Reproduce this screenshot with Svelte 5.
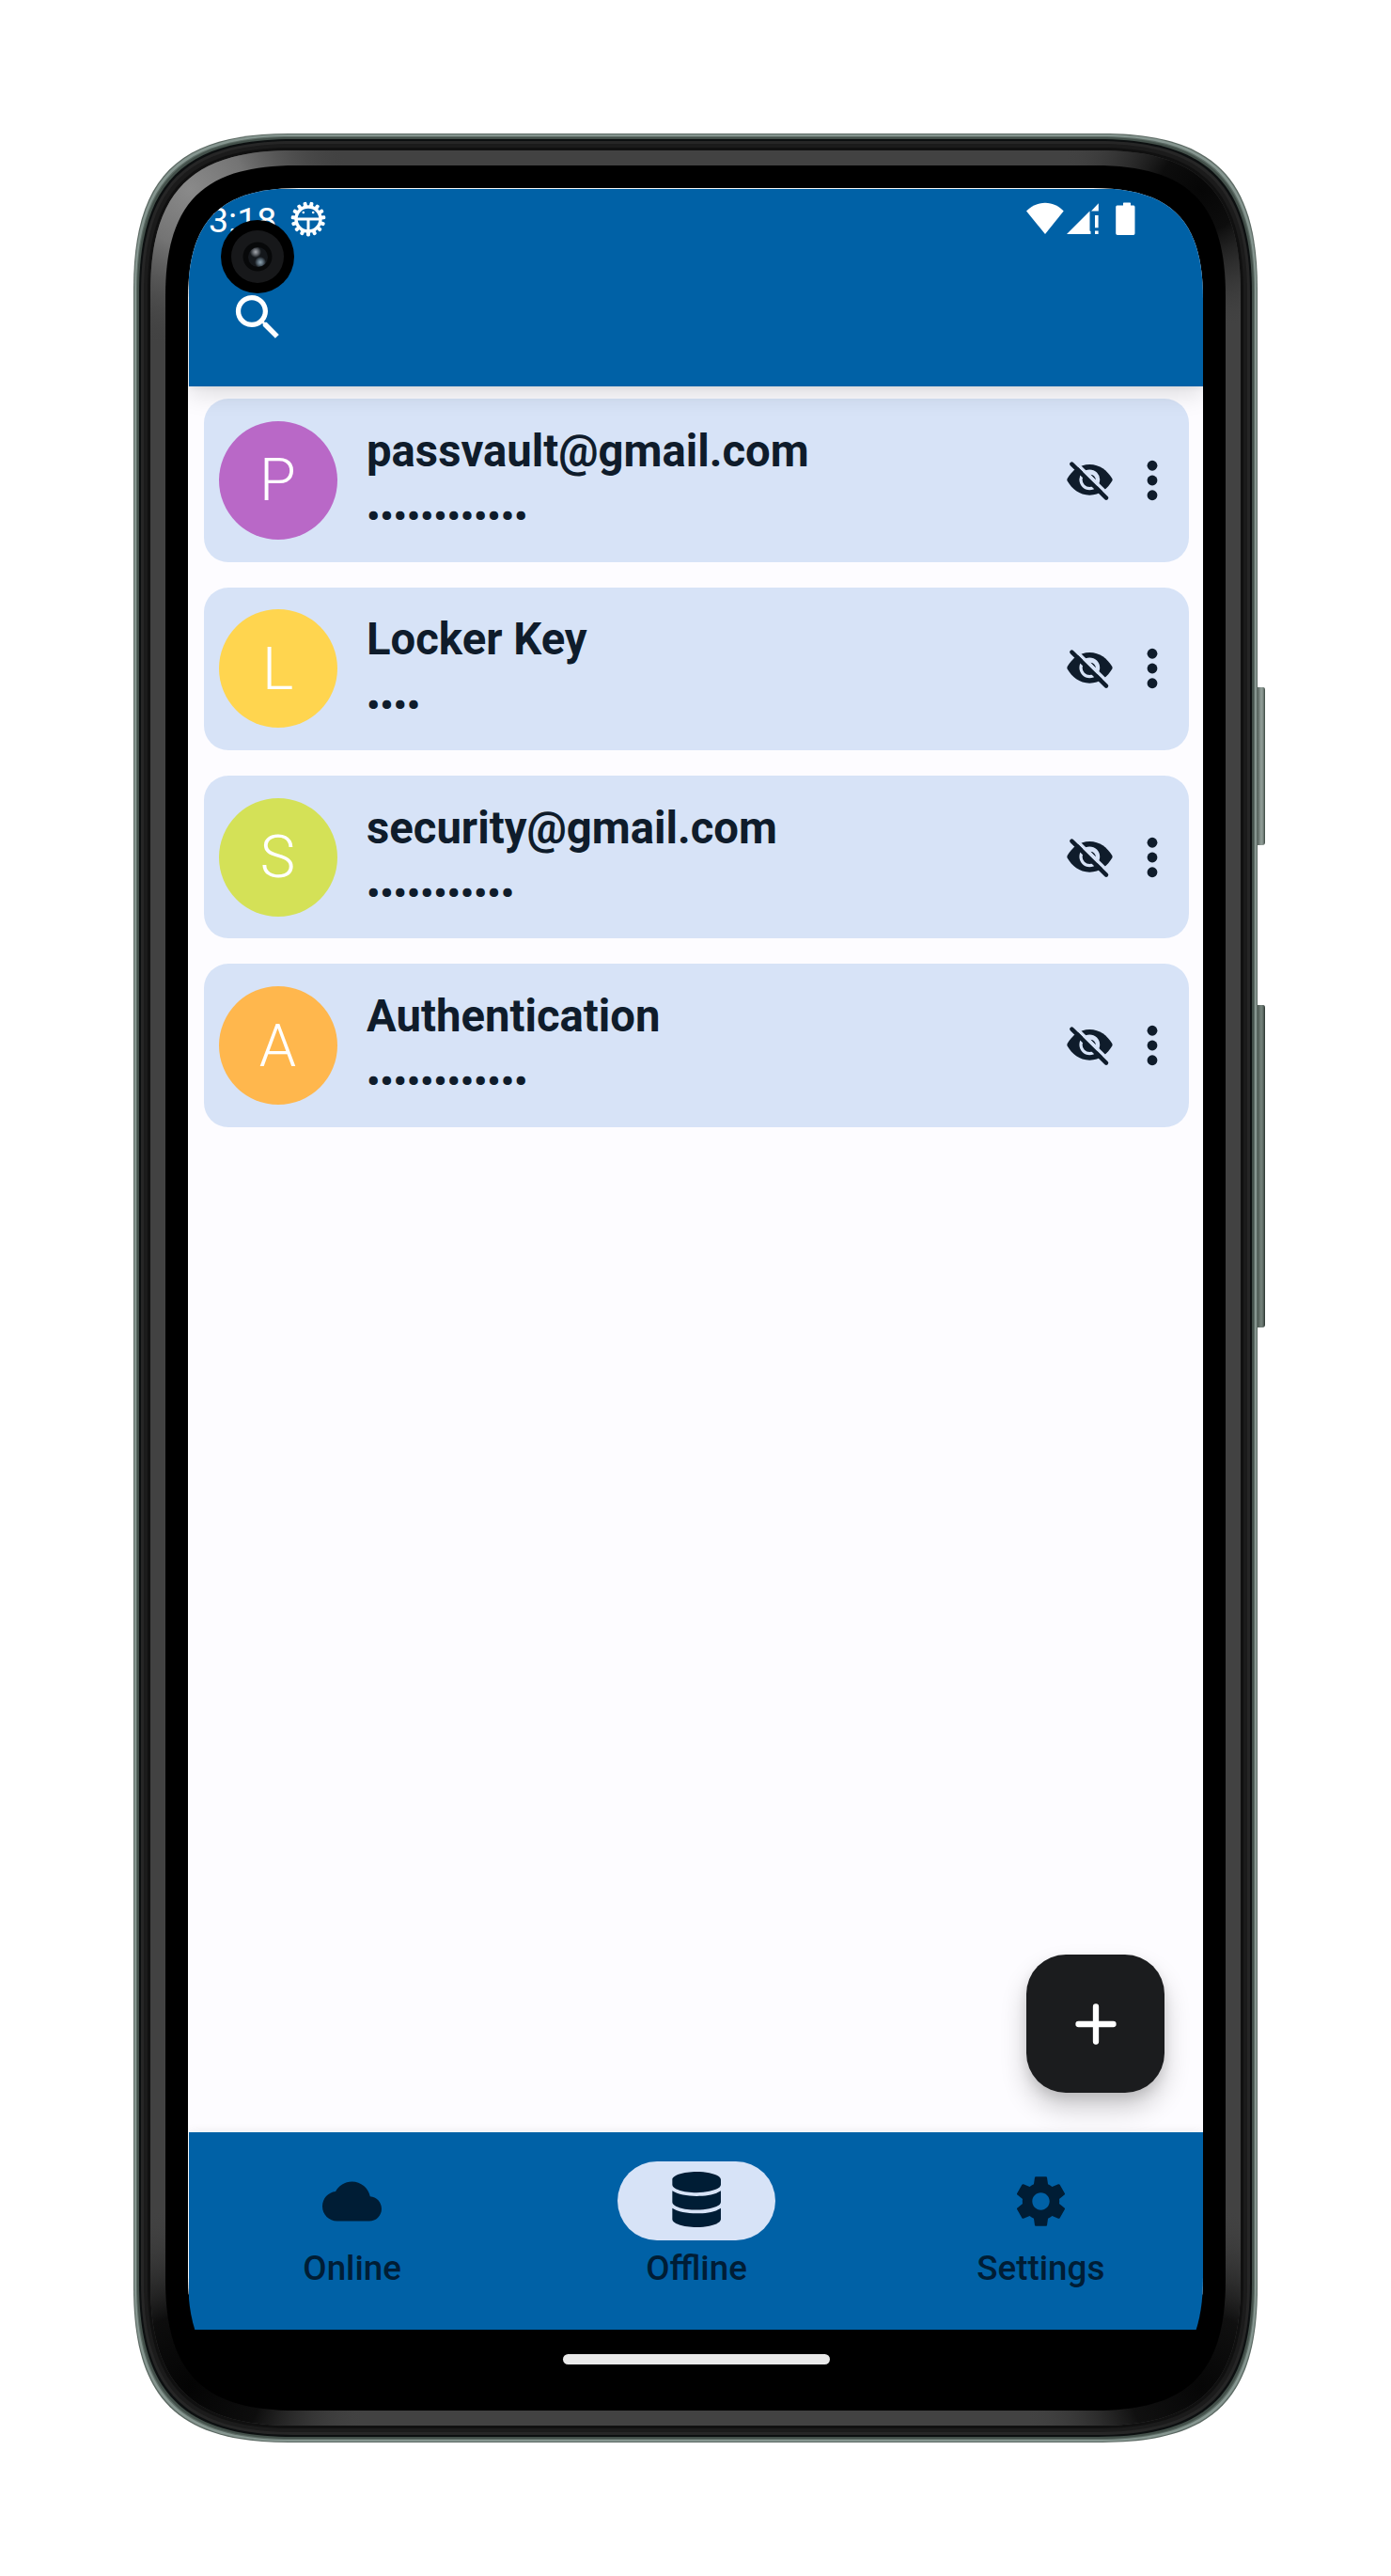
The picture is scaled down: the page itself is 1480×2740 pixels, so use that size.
<script>
  const entries = [
    { name: 'passvault@gmail.com', dots: 12, letter: 'P', tone: 'purple' },
    { name: 'Locker Key', dots: 4, letter: 'L', tone: 'yellow' },
    { name: 'security@gmail.com', dots: 11, letter: 'S', tone: 'lime' },
    { name: 'Authentication', dots: 12, letter: 'A', tone: 'orange' }
  ];

  // Rounded rectangle with long, soft corner tails.
  // d: inset from the outer edge, l: tail length, k: curve handle.
  function shell(d, l, k, w = 1196, h = 2456) {
    const a = d, b = d, r = w - d, t = h - d;
    return `M${a + l} ${b}H${r - l}C${r - k} ${b} ${r} ${b + k} ${r} ${b + l}V${t - l}` +
      `C${r} ${t - k} ${r - k} ${t} ${r - l} ${t}H${a + l}C${a + k} ${t} ${a} ${t - k} ${a} ${t - l}` +
      `V${b + l}C${a} ${b + k} ${a + k} ${b} ${a + l} ${b}Z`;
  }

  const rims = [
    { d: 0, l: 165, k: 47, fill: '#5d6a64' },
    { d: 1, l: 165, k: 47, fill: '#869690' },
    { d: 3, l: 165, k: 47, fill: '#5d6b65' },
    { d: 4, l: 165, k: 47, fill: '#43504a' },
    { d: 6, l: 164, k: 47, fill: '#0c0f10' },
    { d: 8, l: 162, k: 47, fill: '#262626' },
    { d: 11, l: 159, k: 46, fill: '#1b1b1b' },
    { d: 15, l: 154, k: 45, fill: '#101010' }
  ];
  const teeth = Array.from({ length: 15 }, (_, i) => i * 24);
</script>

<div class="page">
  <div class="phone">
    <svg class="body" viewBox="0 0 1204 2456" aria-hidden="true">
      <defs>
        <radialGradient id="tl" gradientUnits="userSpaceOnUse" cx="60" cy="60" r="170">
          <stop offset="0" stop-color="#8a8a8a" /><stop offset="0.35" stop-color="#747474" /><stop offset="1" stop-color="#424242" stop-opacity="0" />
        </radialGradient>
        <radialGradient id="tr" gradientUnits="userSpaceOnUse" cx="1136" cy="60" r="150">
          <stop offset="0" stop-color="#060606" /><stop offset="0.3" stop-color="#0d0d0d" /><stop offset="1" stop-color="#424242" stop-opacity="0" />
        </radialGradient>
        <radialGradient id="bl" gradientUnits="userSpaceOnUse" cx="60" cy="2396" r="190">
          <stop offset="0" stop-color="#040404" /><stop offset="0.4" stop-color="#0d0d0d" /><stop offset="1" stop-color="#424242" stop-opacity="0" />
        </radialGradient>
        <radialGradient id="br" gradientUnits="userSpaceOnUse" cx="1136" cy="2396" r="190">
          <stop offset="0" stop-color="#060606" /><stop offset="0.4" stop-color="#101010" /><stop offset="1" stop-color="#424242" stop-opacity="0" />
        </radialGradient>
        <linearGradient id="key" x1="0" x2="1" y1="0" y2="0">
          <stop offset="0" stop-color="#56635d" /><stop offset="0.5" stop-color="#93a09a" /><stop offset="0.75" stop-color="#7c8983" /><stop offset="1" stop-color="#36423c" />
        </linearGradient>
        <linearGradient id="rocker" x1="0" x2="1" y1="0" y2="0">
          <stop offset="0" stop-color="#4c5852" /><stop offset="0.5" stop-color="#76847d" /><stop offset="0.75" stop-color="#5d6a64" /><stop offset="1" stop-color="#27302b" />
        </linearGradient>
      </defs>
      <path d="M1196 589h6q2 0 2 3v162q0 3-3 3h-5z" fill="url(#key)" />
      <path d="M1196 927h6q2 0 2 3v337q0 3-3 3h-5z" fill="url(#rocker)" />
      {#each rims as rim}
        <path d={shell(rim.d, rim.l, rim.k)} fill={rim.fill} />
      {/each}
      <path d={shell(18, 151, 44)} fill="#424242" />
      {#each ['tl', 'tr', 'bl', 'br'] as corner}
        <path d={shell(18, 151, 44)} fill="url(#{corner})" />
      {/each}
      <path d={shell(34, 139, 40)} fill="#000" />
    </svg>

    <div class="screen">
      <header>
        <div class="status">
          <span class="clock">3:18</span>
          <svg class="debug" viewBox="-19 -19 38 38" aria-hidden="true">
            {#each teeth as angle}
              <rect x="-2" y="-18.4" width="4" height="6" rx="1.6" fill="#fff" transform="rotate({angle + 12})" />
            {/each}
            <circle r="13" fill="none" stroke="#fff" stroke-width="3.4" />
            <path d="M-12 0H12M0 0V13" stroke="#fff" stroke-width="3" />
            <circle cx="-5.2" cy="-7" r="1.3" fill="#fff" /><circle cx="5.2" cy="-7" r="1.3" fill="#fff" />
          </svg>
          <svg class="signals" viewBox="0 0 118 36" aria-hidden="true">
            <g fill="#fff">
              <path d="M0 9.5C5 4.5 12 .8 20 .8S35 4.5 39.7 9.5L20 34Z" />
              <path d="M43 34 67.5 9.500V30.5L68.5 31V34Z" />
              <path d="M76.8 1.2V9.500H69Z" /><path d="M73 14h3.600v13.300H73zM73 30.500h3.600V34H73z" />
              <path d="M103 3.600v-2.400q0-.6.7-.6h6.600q.7 0 .7.600v2.400h3.200q1.300 0 1.300 1.600v28q0 1.800-1.500 1.800H97q-1.800 0-1.800-1.800v-28q0-1.600 1.400-1.600z" />
            </g>
          </svg>
        </div>
        <svg class="search" viewBox="0 0 24 24" aria-hidden="true">
          <path fill="#fff" d="M15.500 14h-.79l-.28-.27C15.410 12.590 16 11.110 16 9.500 16 5.910 13.090 3 9.500 3S3 5.910 3 9.500 5.910 16 9.500 16c1.610 0 3.090-.59 4.230-1.570l.27.28v.79l5 4.990L20.490 19l-4.990-5zm-6 0C7.010 14 5 11.990 5 9.500S7.010 5 9.500 5 14 7.010 14 9.500 11.990 14 9.500 14z" />
        </svg>
      </header>

      <main>
        {#each entries as entry}
          <article>
            <div class="avatar {entry.tone}">{entry.letter}</div>
            <div class="info">
              <div class="name">{entry.name}</div>
              <div class="secret">{'•'.repeat(entry.dots)}</div>
            </div>
            <svg class="eye" viewBox="14 9 52 44" aria-hidden="true">
              <path class="ink" d="M15.6 31.600Q15 30.300 15.600 29C20.500 20.500 28.500 13.900 39.300 13.900S58.300 20.500 63.300 29Q64 30.300 63.300 31.600C58.300 40.100 50.200 46.700 39.300 46.700S20.500 40.100 15.600 31.600Z" />
              <circle class="gap" cx="39.300" cy="30.300" r="9.300" stroke-width="3.200" />
              <path class="paper" d="M32.700 23.700A9.300 9.300 0 0 1 45.900 36.900Z" />
              <path class="ink" d="M40.300 24.700Q45.200 25.300 46 30.500Z" />
              <path class="gap" d="M23.200 10.700 62.600 49.500" stroke-width="3.400" />
              <path class="slash" d="M20.400 13.600 57 49.600" />
            </svg>
            <svg class="more" viewBox="0 0 12 44" aria-hidden="true">
              <circle cx="6" cy="6.250" r="5.400" /><circle cx="6" cy="22" r="5.400" /><circle cx="6" cy="37.750" r="5.400" />
            </svg>
          </article>
        {/each}
        <div class="fab">
          <svg viewBox="0 0 44 44" aria-hidden="true"><path d="M3.500 22H40.500M22 3.500V40.500" stroke="#fff" stroke-width="6.300" stroke-linecap="round" /></svg>
        </div>
      </main>

      <nav>
        <div class="tab">
          <div class="pill">
            <svg class="glyph" viewBox="0 0 24 24" aria-hidden="true"><path d="M19.350 10.040C18.670 6.590 15.640 4 12 4 9.110 4 6.600 5.640 5.350 8.040 2.340 8.360 0 10.910 0 14c0 3.310 2.690 6 6 6h13c2.760 0 5-2.240 5-5 0-2.640-2.050-4.780-4.650-4.960z" /></svg>
          </div>
          <span>Online</span>
        </div>
        <div class="tab">
          <div class="pill active">
            <svg class="stack" viewBox="0 0 448 512" aria-hidden="true"><path d="M448 73.143v45.714C448 159.143 347.667 192 224 192S0 159.143 0 118.857V73.143C0 32.857 100.333 0 224 0s224 32.857 224 73.143zM448 176v102.857C448 319.143 347.667 352 224 352S0 319.143 0 278.857V176c48.125 33.143 136.208 48.572 224 48.572S399.874 209.143 448 176zm0 160v102.857C448 479.143 347.667 512 224 512S0 479.143 0 438.857V336c48.125 33.143 136.208 48.572 224 48.572S399.874 369.143 448 336z" /></svg>
          </div>
          <span>Offline</span>
        </div>
        <div class="tab">
          <div class="pill">
            <svg class="glyph" viewBox="0 0 24 24" aria-hidden="true"><path d="M19.430 12.980c.04-.32.07-.64.07-.98s-.03-.66-.07-.98l2.110-1.650c.19-.15.24-.42.12-.64l-2-3.460c-.12-.22-.39-.3-.61-.22l-2.490 1c-.52-.4-1.080-.73-1.690-.98l-.38-2.650C14.460 2.180 14.250 2 14 2h-4c-.25 0-.46.18-.49.42l-.38 2.650c-.61.25-1.170.59-1.690.98l-2.490-1c-.23-.09-.49 0-.61.22l-2 3.460c-.13.22-.07.49.12.64l2.110 1.650c-.04.32-.07.65-.07.98s.03.66.07.98l-2.110 1.650c-.19.15-.24.42-.12.64l2 3.460c.12.22.39.3.61.22l2.490-1c.52.4 1.080.73 1.690.98l.38 2.650c.03.24.24.42.49.42h4c.25 0 .46-.18.49-.42l.38-2.650c.61-.25 1.170-.59 1.690-.98l2.490 1c.23.09.49 0 .61-.22l2-3.460c.12-.22.07-.49-.12-.64l-2.110-1.650zM12 15.500c-1.930 0-3.500-1.570-3.500-3.500s1.570-3.500 3.500-3.500 3.500 1.570 3.500 3.500-1.570 3.500-3.500 3.500z" /></svg>
          </div>
          <span>Settings</span>
        </div>
      </nav>
      <div class="gesture"><div class="handle"></div></div>
    </div>

    <div class="camera"><div class="lens"><div class="iris"></div></div></div>
  </div>
</div>

<style>
  :global(body) { background: #fff; }
  .page { box-sizing: border-box; width: 1480px; height: 2740px; padding: 142px; font-family: Roboto, "Liberation Sans", sans-serif; }
  .phone { position: relative; box-sizing: border-box; width: 1196px; height: 2456px; padding: 58px; }
  .body { position: absolute; left: 0; top: 0; width: 1204px; height: 2456px; }
  .screen {
    position: relative; box-sizing: border-box; display: flex; flex-direction: column;
    width: 1080px; height: 2340px; padding: 1px 0 0 1px; background: linear-gradient(#fff 2240px, #000 2241px);
    clip-path: path("M118 0H962C1046 0 1080 34 1080 118V2222C1080 2306 1046 2340 962 2340H118C34 2340 0 2306 0 2222V118C0 34 34 0 118 0Z");
  }
  header { position: relative; z-index: 1; height: 210px; background: #0061a6; box-shadow: 0 8px 24px rgba(0, 0, 0, 0.13), 0 2px 6px rgba(0, 0, 0, 0.05); }
  .status { display: flex; align-items: center; height: 63px; padding: 0 70px 0 21px; }
  .clock { font-size: 37.5px; line-height: 44px; color: #fff; width: 87px; padding-top: 3px; }
  .debug { width: 38px; height: 38px; }
  .signals { width: 118px; height: 36px; margin-left: auto; }
  .search { display: block; width: 63px; height: 63px; margin: 42px 0 0 42px; }

  main { position: relative; flex: 1; display: flex; flex-direction: column; gap: 27px; padding: 13.300px 15px 0 16px; background: #fdfcff; }
  article { box-sizing: border-box; display: flex; align-items: center; height: 173.400px; padding: 0 33.400px 0 15.500px; border-radius: 26px; background: #d7e3f7; color: #0f1c2b; }
  .avatar { display: grid; place-items: center; width: 126px; height: 126px; border-radius: 50%; color: #fff; font-size: 63px; font-weight: 300; line-height: 1; }
  .purple { background: #b968c7; }
  .yellow { background: #ffd54f; }
  .lime { background: #d4e157; }
  .orange { background: #ffb74d; }
  .info { flex: 1; padding: 8px 0 0 31.500px; }
  .name { font-size: 47.250px; font-weight: 700; line-height: 60px; }
  .secret { margin-top: 10.500px; font-size: 39.700px; font-weight: 700; line-height: 60px; }
  .eye { width: 52px; height: 44px; margin-right: 33.600px; }
  .ink { fill: #0f1c2b; }
  .paper { fill: #d7e3f7; }
  .gap { fill: none; stroke: #d7e3f7; }
  .slash { fill: none; stroke: #0f1c2b; stroke-width: 4.500; stroke-linecap: round; }
  .more { width: 12px; height: 44px; fill: #0f1c2b; }

  .fab {
    position: absolute; right: 41px; bottom: 42px; display: grid; place-items: center; width: 147px; height: 147px; border-radius: 42px;
    background: #1b1c1e; box-shadow: 0 16px 28px rgba(0, 0, 0, 0.2), 0 6px 12px rgba(0, 0, 0, 0.1);
  }
  .fab svg { width: 44px; height: 44px; }

  nav { position: relative; display: grid; grid-template-columns: repeat(3, 1fr); gap: 21px; height: 210px; padding-left: 1px; box-sizing: border-box; background: #0061a6; box-shadow: 0 -2px 10px rgba(0, 0, 0, 0.05); }
  .tab { display: flex; flex-direction: column; align-items: center; padding-top: 31px; color: #001d35; font-size: 36.750px; font-weight: 500; line-height: 42px; }
  .pill { display: grid; place-items: center; width: 168px; height: 84px; margin-bottom: 9px; border-radius: 42px; }
  .active { background: #d7e3f7; }
  .glyph { width: 63px; height: 63px; fill: #001d35; }
  .stack { width: 52.300px; height: 59px; margin-bottom: 4px; fill: #001d35; }
  .gesture { display: grid; justify-items: center; height: 62px; padding-top: 26px; box-sizing: border-box; background: #000; }
  .handle { width: 284px; height: 11px; border-radius: 6px; background: #eaeaea; }

  .camera { position: absolute; left: 93px; top: 92px; display: grid; place-items: center; width: 78px; height: 78px; border-radius: 50%; background: #000; }
  .lens { display: grid; place-items: center; width: 56px; height: 56px; border-radius: 50%; background: radial-gradient(circle, #070809 0 15px, #17181a 16px); }
  .iris {
    width: 21px; height: 21px; border-radius: 50%;
    background: radial-gradient(circle at 8px 5px, #a5a8ae 0, #60646a 3px, transparent 6px), radial-gradient(circle at 13px 16px, #8fa3b0 0, #566672 3px, transparent 6px), #14171b;
  }
</style>
